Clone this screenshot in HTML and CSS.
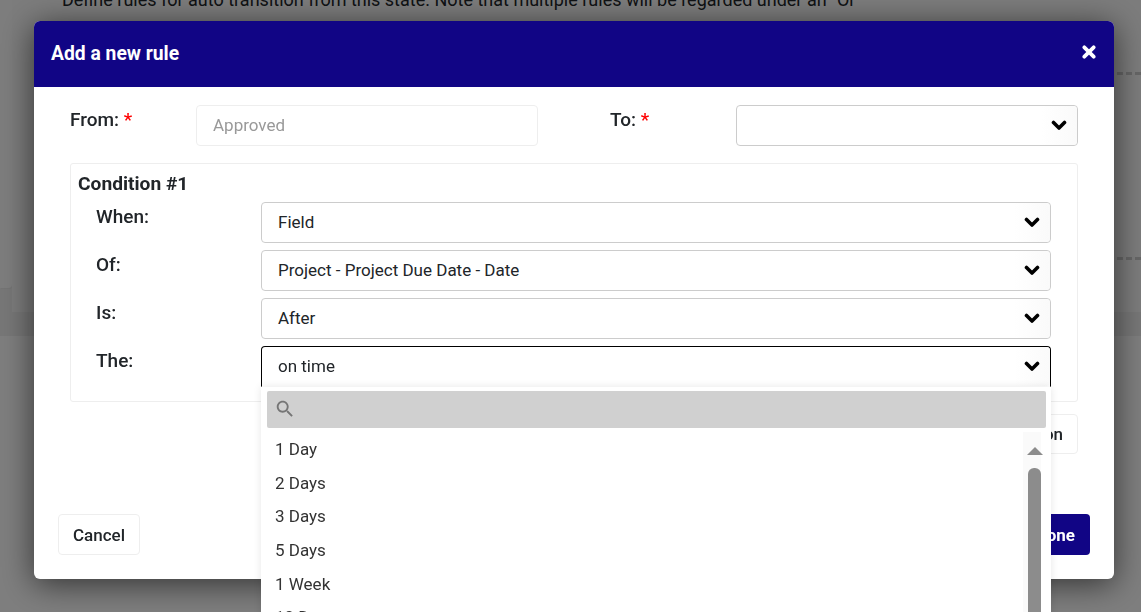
FILE: index.html
```html
<!DOCTYPE html>
<html lang="en">
<head>
    <meta charset="UTF-8">
    <meta name="viewport" content="width=device-width, initial-scale=1.0">
    <title>Add a new rule</title>
    <link rel="stylesheet" href="styles.css">
</head>
<body>

    <!-- page behind the dialog -->
    <div class="page">
        <div class="page-top">
            <div class="side-column">
                <div class="side-card"></div>
            </div>
            <div class="main-area">
                <p class="rules-intro">Define rules for auto transition from this state. Note that multiple rules will be regarded under an "Or"</p>
                <div class="dash dash-one"></div>
                <div class="dash dash-two"></div>
            </div>
        </div>
        <div class="page-band"></div>
    </div>

    <div class="overlay">
        <div class="modal">
            <div class="modal-header">
                <h3>Add a new rule</h3>
                <svg class="close-icon" viewBox="0 0 12 12"><path d="M2 2l8 8M10 2l-8 8"/></svg>
            </div>

            <div class="modal-body">
                <div class="from-to">
                    <label class="field-label">From: <span class="req">*</span></label>
                    <input class="from-input" type="text" value="Approved" disabled>
                    <label class="field-label to-label">To: <span class="req">*</span></label>
                    <div class="select">
                        <span class="select-value"></span>
                        <span class="select-arrow"><svg viewBox="0 0 16 12"><path d="M2.5 2.5L8 8l5.500-5.500"/></svg></span>
                    </div>
                </div>

                <div class="condition">
                    <h4>Condition #1</h4>
                    <div class="condition-row">
                        <label class="field-label">When:</label>
                        <div class="select">
                            <span class="select-value">Field</span>
                            <span class="select-arrow"><svg viewBox="0 0 16 12"><path d="M2.5 2.5L8 8l5.500-5.500"/></svg></span>
                        </div>
                    </div>
                    <div class="condition-row">
                        <label class="field-label">Of:</label>
                        <div class="select">
                            <span class="select-value">Project - Project Due Date - Date</span>
                            <span class="select-arrow"><svg viewBox="0 0 16 12"><path d="M2.5 2.5L8 8l5.500-5.500"/></svg></span>
                        </div>
                    </div>
                    <div class="condition-row">
                        <label class="field-label">Is:</label>
                        <div class="select">
                            <span class="select-value">After</span>
                            <span class="select-arrow"><svg viewBox="0 0 16 12"><path d="M2.5 2.5L8 8l5.500-5.500"/></svg></span>
                        </div>
                    </div>
                    <div class="condition-row">
                        <label class="field-label">The:</label>
                        <div class="select select-open">
                            <span class="select-value">on time</span>
                            <span class="select-arrow"><svg viewBox="0 0 16 12"><path d="M2.5 2.5L8 8l5.500-5.500"/></svg></span>

                            <div class="dropdown">
                                <div class="dropdown-search">
                                    <svg viewBox="0 0 24 24"><path d="M15.500 14h-.79l-.28-.27C15.410 12.590 16 11.110 16 9.500 16 5.910 13.090 3 9.500 3S3 5.910 3 9.500 5.910 16 9.500 16c1.610 0 3.090-.59 4.230-1.570l.27.28v.79l5 4.990L20.490 19l-4.990-5zm-6 0C7.010 14 5 11.990 5 9.500S7.010 5 9.500 5 14 7.010 14 9.500 11.990 14 9.500 14z"/></svg>
                                </div>
                                <div class="dropdown-body">
                                    <ul class="dropdown-list">
                                        <li>1 Day</li>
                                        <li>2 Days</li>
                                        <li>3 Days</li>
                                        <li>5 Days</li>
                                        <li>1 Week</li>
                                        <li>10 Days</li>
                                        <li>2 Weeks</li>
                                    </ul>
                                    <div class="scroll-track">
                                        <div class="scroll-arrow"></div>
                                        <div class="scroll-thumb"></div>
                                    </div>
                                </div>
                            </div>
                        </div>
                    </div>
                </div>

                <div class="add-row">
                    <button class="btn">Add condition</button>
                </div>
            </div>

            <div class="modal-footer">
                <button class="btn btn-cancel">Cancel</button>
                <button class="btn btn-primary">Done</button>
            </div>
        </div>
    </div>

</body>
</html>
```

FILE: styles.css
```css
html, body { height: 612px; margin: 0; overflow: hidden; }
body { font-family: Roboto, "Liberation Sans", sans-serif; color: #212529; background: #fcfcfc; }

/* page behind */
.page-top { display: flex; height: 312px; }
.side-column { width: 12px; height: 336px; background: #eee; }
.side-card { height: 288px; background: #fafafa; border-radius: 0 0 4px 0; box-shadow: 1px 1px 0 #e8e8e8; }
.main-area { flex: 1; background: #f8f8f8; overflow: hidden; }
.rules-intro { margin: -14px 0 0 50px; font-size: 18px; line-height: 27px; white-space: nowrap; }
.dash { height: 0; margin-left: 40px; border-top: 3px dashed #ccc; }
.dash-one { margin-top: 59px; }
.dash-two { margin-top: 182px; }
.page-band { height: 24px; background: #eee; }

.overlay { position: fixed; top: 0; left: 0; right: 0; bottom: 0; background: rgba(0, 0, 0, .5); }

.modal { width: 1080px; margin: 21px 0 0 34px; background: #fff; border-radius: 6px; box-shadow: 0 5px 32px rgba(0, 0, 0, .6); }
.modal-header { display: flex; justify-content: space-between; align-items: center; height: 66px; padding: 0 18px 0 17px; box-sizing: border-box; background: #110585; border-radius: 6px 6px 0 0; color: #fff; }
.modal-header h3 { margin: 0; padding-bottom: 2px; font-size: 19.300px; font-weight: 700; }
.close-icon { width: 14px; height: 14px; margin-top: -4px; }
.close-icon path { fill: none; stroke: #fff; stroke-width: 3.2; stroke-linecap: round; }

.modal-body { padding: 18px 36px 0; }
.from-to { display: grid; grid-template-columns: 126px 342px 198px 342px; }
.to-label { margin-left: 72px; width: 126px; }
.field-label { font-size: 19px; font-weight: 500; line-height: 29px; color: #212529; }
.req { color: #f00; }

.from-input { height: 41px; box-sizing: border-box; padding: 0 16px 2px; border: 1px solid #eee; border-radius: 4px; background: #fff; font: 17px Roboto, sans-serif; color: #999; }

.select { position: relative; display: flex; justify-content: space-between; align-items: center; height: 41px; box-sizing: border-box; padding-left: 16px; border: 1px solid #ccc; border-radius: 4px; background: #fff; font-size: 17px; color: #212529; }
.select-value { padding-bottom: 2px; }
.select-arrow { display: flex; align-items: center; justify-content: center; width: 36px; height: 39px; background: linear-gradient(to right, #fff, #fafafa); border-radius: 0 4px 4px 0; }
.select-arrow svg { width: 16px; height: 12px; }
.select-arrow path { fill: none; stroke: #000; stroke-width: 3.6; stroke-linecap: round; stroke-linejoin: round; }

.condition { margin-top: 17px; padding: 8px 26px 14px 7px; border: 1px solid #eee; border-radius: 3px; }
.condition h4 { margin: 0 0 6px; font-size: 19.200px; font-weight: 700; line-height: 24px; }
.condition-row { display: grid; grid-template-columns: 165px 1fr; margin: 0 0 7px 18px; }
.condition-row:last-child { margin-bottom: 0; }

.select-open { border-color: #000 #000 transparent; border-radius: 4px 4px 0 0; }
.dropdown { position: absolute; top: 40px; left: -1px; right: -1px; height: 320px; background: #fff; box-shadow: 0 0 8px rgba(0, 0, 0, .1); }
.dropdown-search { display: flex; align-items: center; height: 37px; margin: 4px 5px 4px 6px; padding: 0 0 2px 7px; box-sizing: border-box; background: #d0d0d0; border-radius: 2px; }
.dropdown-search svg { width: 22px; height: 22px; fill: #757575; }
.dropdown-body { display: flex; }
.dropdown-list { flex: 1; margin: 0; padding: 0; list-style: none; }
.dropdown-list li { height: 33.700px; padding-left: 14px; font-size: 17px; line-height: 34px; color: #333; }
.scroll-track { width: 18px; height: 260px; margin-right: 10px; background: #fafafa; }
.scroll-arrow { width: 0; margin: 15px 0 0 4px; border-left: 8px solid transparent; border-right: 8px solid transparent; border-bottom: 8px solid #8c8c8c; }
.scroll-thumb { width: 13px; height: 200px; margin: 13px 0 0 5px; background: #8c8c8c; border-radius: 6px; }

.add-row { display: flex; justify-content: flex-end; margin-top: 12px; }

.btn { height: 41px; padding: 0 14px; border: 1px solid #eee; border-radius: 4px; background: #fff; font: 500 17px Roboto, sans-serif; color: #212529; }
.add-row .btn { height: 40px; }
.modal-footer { display: flex; justify-content: space-between; margin-top: 60px; padding: 0 24px 24px; }
.btn-cancel { width: 82px; padding: 0; }
.btn-primary { padding: 0 15px; border: none; background: #110585; color: #fff; font-weight: 700; }
```
